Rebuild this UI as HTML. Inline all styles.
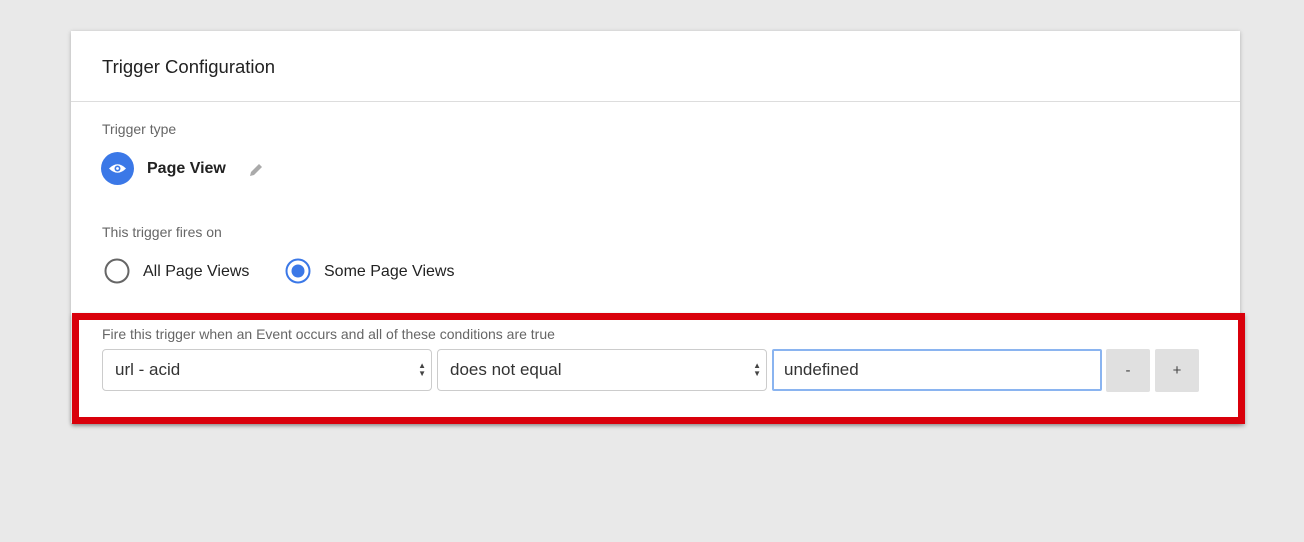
<!DOCTYPE html>
<html><head><style>
body{margin:0;width:1304px;height:542px;background:#e9e9e9;font-family:"Liberation Sans",sans-serif;position:relative;overflow:hidden}
.card{position:absolute;left:71px;top:31px;width:1169px;height:392px;background:#fff;box-shadow:0 1px 4px rgba(0,0,0,.25)}
.hdr{position:absolute;left:0;top:0;width:100%;height:70px;border-bottom:1px solid #ddd}
.t{position:absolute;white-space:nowrap}
.red{position:absolute;left:72px;top:313px;width:1159px;height:97px;border:7px solid #d9000b;background:#fff;box-shadow:0 2px 4px rgba(0,0,0,.3)}
.sel{position:absolute;top:349px;border:1px solid #ccc;border-radius:4px;background:#fff;font-size:17px;color:#333;line-height:40px;padding-left:12px;box-sizing:border-box;height:42px}
.btn{position:absolute;top:349px;height:43px;width:44px;background:#e0e0e0;border-radius:2px;text-align:center;line-height:43px;color:#444;font-size:15px}
.arr{position:absolute;right:5px;top:12px;font-size:8px;line-height:8px;color:#444}
</style></head><body>
<div class="card"><div class="hdr"></div></div>
<div class="t" style="left:102px;top:56px;font-size:18.5px;color:#222">Trigger Configuration</div>
<div class="t" style="left:102px;top:121px;font-size:14px;color:#666">Trigger type</div>
<svg style="position:absolute;left:101px;top:152px" width="33" height="33"><circle cx="16.5" cy="16.5" r="16.5" fill="#3b78e7"/><path d="M8 16.5Q16.5 8 25 16.5Q16.5 25 8 16.5Z" fill="#fff"/><circle cx="16.5" cy="16.5" r="3" fill="#3b78e7"/><circle cx="16.5" cy="16.5" r="1.4" fill="#fff"/></svg>
<div class="t" style="left:147px;top:160px;font-size:16px;font-weight:bold;color:#222">Page View</div>
<svg style="position:absolute;left:248px;top:162px" width="16" height="16"><path d="M2 14L3 10L11 2L14 5L6 13Z" fill="#aaa"/></svg>
<div class="t" style="left:102px;top:224px;font-size:14px;color:#666">This trigger fires on</div>
<svg style="position:absolute;left:104px;top:258px" width="26" height="26"><circle cx="13" cy="13" r="11.5" fill="none" stroke="#666" stroke-width="2"/></svg>
<div class="t" style="left:143px;top:263px;font-size:16px;color:#222">All Page Views</div>
<svg style="position:absolute;left:285px;top:258px" width="26" height="26"><circle cx="13" cy="13" r="11.5" fill="none" stroke="#3b78e7" stroke-width="2"/><circle cx="13" cy="13" r="6.5" fill="#3b78e7"/></svg>
<div class="t" style="left:324px;top:263px;font-size:16px;color:#222">Some Page Views</div>
<div class="red"></div>
<div class="t" style="left:102px;top:326px;font-size:14px;color:#666">Fire this trigger when an Event occurs and all of these conditions are true</div>
<div class="sel" style="left:102px;width:330px">url - acid<div class="arr">▲<br>▼</div></div>
<div class="sel" style="left:437px;width:330px">does not equal<div class="arr">▲<br>▼</div></div>
<div class="sel" style="left:772px;width:330px;border:2px solid #8ab4f0;border-radius:2px;padding-left:10px;line-height:38px">undefined</div>
<div class="btn" style="left:1106px">-</div>
<div class="btn" style="left:1155px">+</div>
</body></html>
